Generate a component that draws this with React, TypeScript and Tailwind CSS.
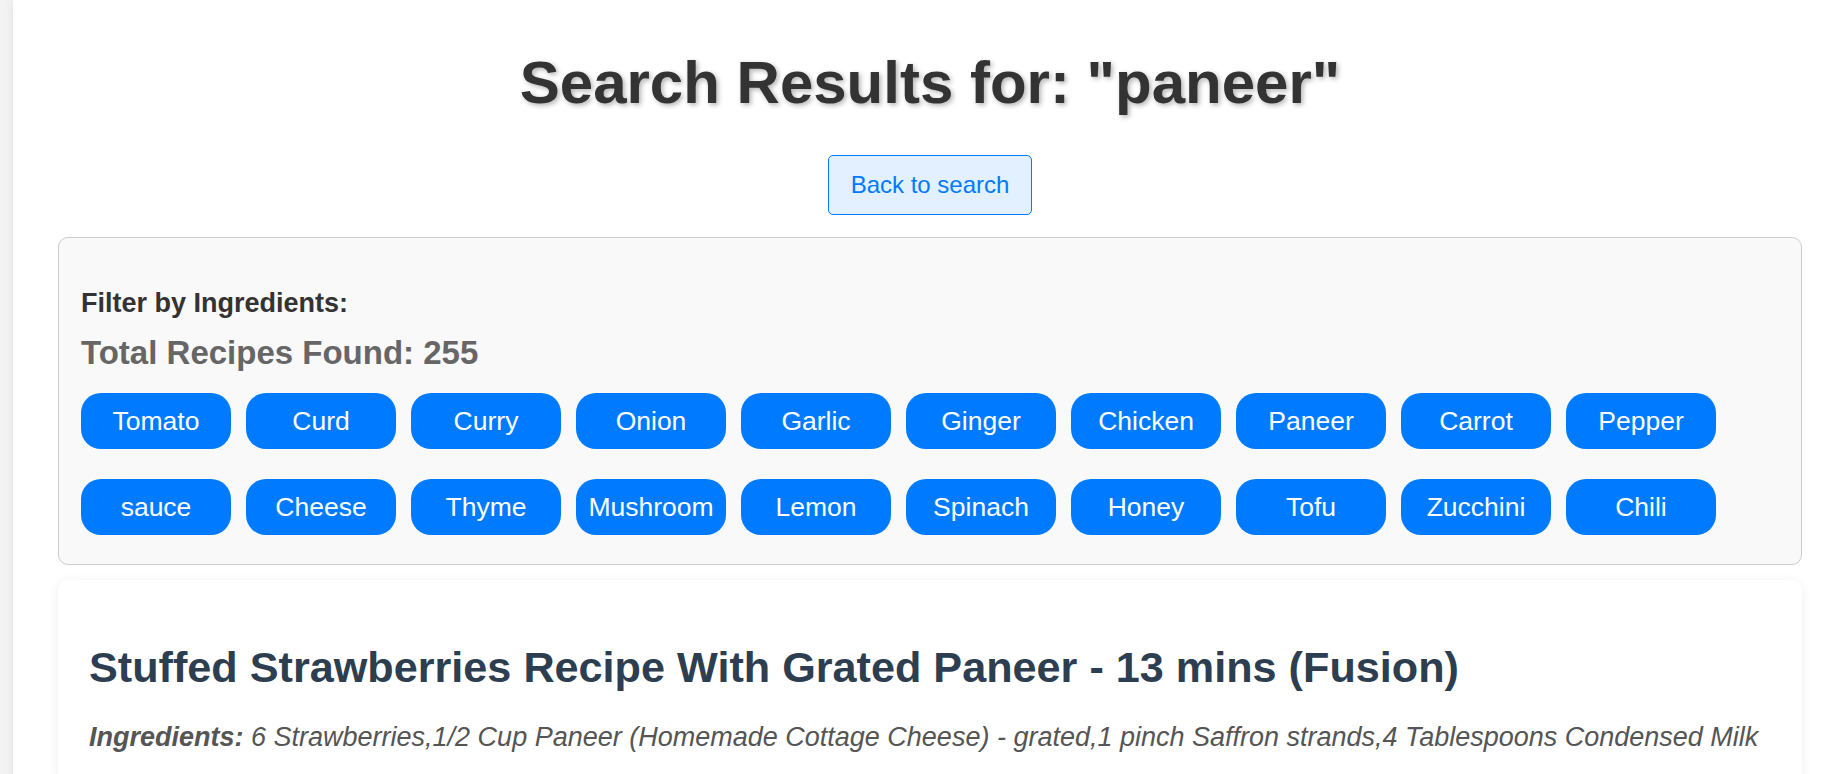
import React from 'react';

const ingredients = [
  'Tomato', 'Curd', 'Curry', 'Onion', 'Garlic', 'Ginger', 'Chicken', 'Paneer', 'Carrot', 'Pepper',
  'sauce', 'Cheese', 'Thyme', 'Mushroom', 'Lemon', 'Spinach', 'Honey', 'Tofu', 'Zucchini', 'Chili'
];

const App: React.FC = () => {
  return <div className="min-h-screen w-full overflow-hidden bg-[#f3f3f3] font-['Liberation_Sans',Arial,sans-serif]">
      <div className="ml-[13px] min-h-screen bg-white pl-[45px] pr-[37px] shadow-[0_0_10px_rgba(0,0,0,0.08)]">
        <h1 className="pt-[48px] text-center text-[60px] leading-[69px] font-bold text-[#333] [text-shadow:2px_2px_5px_rgba(0,0,0,0.3)]">
          Search Results for: "paneer"
        </h1>
        <div className="mt-[38px] flex justify-center">
          <button className="rounded-[5px] border border-[#007bff] bg-[#e3f0ff] px-[22px] py-[15px] text-[24px] leading-[28px] text-[#007bff]">
            Back to search
          </button>
        </div>
        <div className="mt-[22px] rounded-[10px] border border-[#cccccc] bg-[#f9f9f9] px-[22px] pt-[50px] pb-[29px]">
          <h3 className="text-[27px] leading-[31px] font-bold text-[#333]">Filter by Ingredients:</h3>
          <div className="mt-[15px] text-[33px] leading-[37px] font-bold text-[#666]">Total Recipes Found: 255</div>
          <div className="mt-[22px] flex flex-wrap gap-x-[15px] gap-y-[30px]">
            {ingredients.map((name, i) => <button key={i} className="flex h-[56px] w-[150px] items-center justify-center rounded-[20px] bg-[#007bff] text-[26.5px] leading-[30px] text-white">
                {name}
              </button>)}
          </div>
        </div>
        <div className="mt-[15px] rounded-[10px] bg-white px-[31px] pt-[63px] pb-[30px] shadow-[0_2px_12px_rgba(0,0,0,0.07)]">
          <h2 className="text-[43.2px] leading-[49px] font-bold text-[#2c3e50]">
            Stuffed Strawberries Recipe With Grated Paneer - 13 mins (Fusion)
          </h2>
          <p className="mt-[30px] text-[27px] leading-[31px] italic text-[#555]">
            <span className="font-bold">Ingredients:</span> 6 Strawberries,1/2 Cup Paneer (Homemade Cottage Cheese) - grated,1 pinch Saffron strands,4 Tablespoons Condensed Milk
          </p>
        </div>
      </div>
    </div>;
};

export default App;
